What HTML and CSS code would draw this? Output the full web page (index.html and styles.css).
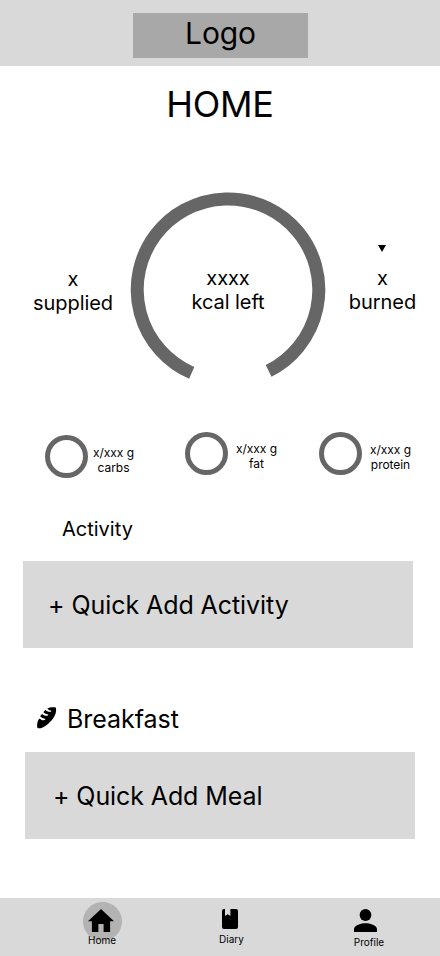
FILE: index.html
```html
<!DOCTYPE html>
<html lang="en">
<head>
<meta charset="utf-8">
<title>Home</title>
<link rel="stylesheet" href="styles.css">
</head>
<body>
<div class="app">
  <header class="topbar"><div class="logo">Logo</div></header>
  <main class="content">
    <h1 class="title">HOME</h1>
    <section class="summary">
      <div class="stat supplied">x<br>supplied</div>
      <div class="gauge">
        <svg class="gauge-arc" viewBox="0 0 196 196"><path d="M61.7 181.9A90.8 90.8 0 1 1 138.6 179.9" fill="none" stroke="#666" stroke-width="13"/></svg>
        <div class="stat left">xxxx<br>kcal left</div>
      </div>
      <div class="stat burned"><svg class="caret" viewBox="0 0 8 7"><path d="M0 0h8L4 7z"/></svg>x<br>burned</div>
    </section>
    <section class="macros">
      <div class="macro carbs"><span class="ring"></span><span class="amount">x/xxx g<br>carbs</span></div>
      <div class="macro fat"><span class="ring"></span><span class="amount">x/xxx g<br>fat</span></div>
      <div class="macro protein"><span class="ring"></span><span class="amount">x/xxx g<br>protein</span></div>
    </section>
    <h2 class="activity-title">Activity</h2>
    <button class="quick activity">+ Quick Add Activity</button>
    <h2 class="meal-title">
      <svg class="bread" viewBox="0 0 20 22"><path d="M0.2 20.5C-.1 17 .4 14 2.4 11.6L4.8 13Q6.8 13.5 8.2 12.7L8.3 12.1Q5.2 11.4 3.2 9.6Q3.5 8 5 7L7.6 8.5Q9.8 9.1 11.2 8.2L11.2 7.5Q8.3 6.9 6.5 5.4Q7.1 3.9 8.4 3.1L10.8 4.6Q12.8 5.2 14.3 4.4L14.2 3.7Q11.8 3.2 10.2 1.8C12.5 .3 16 0 18.8 .6C20 5.6 17.7 10 14 14C10.3 17.9 5 22 1.2 21.2Z"/></svg>
      <span>Breakfast</span>
    </h2>
    <button class="quick meal">+ Quick Add Meal</button>
  </main>
  <nav class="tabs">
    <a class="tab home"><span class="disc"><svg class="house" viewBox="2 3 20 17" preserveAspectRatio="none"><path d="M10 20v-6h4v6h5v-8h3L12 3 2 12h3v8z"/></svg></span><span class="label">Home</span></a>
    <a class="tab diary"><svg class="book" viewBox="0 0 16 20"><path d="M2 0H3V7L5.7 5.2L8.4 7V0H14Q16 0 16 2V18Q16 20 14 20H2Q0 20 0 18V2Q0 0 2 0Z"/></svg><span class="label">Diary</span></a>
    <a class="tab profile"><svg class="person" viewBox="0 0 23 23"><circle cx="11.5" cy="6" r="5.9"/><path d="M0 23V20C0 16.2 7.5 14.2 11.5 14.2S23 16.2 23 20V23Z"/></svg><span class="label">Profile</span></a>
  </nav>
</div>
</body>
</html>
```
FILE: styles.css
```css
* { box-sizing: border-box; }
body { margin: 0; background: #fff; color: #000; font-family: Inter, sans-serif; }
svg { display: block; flex: none; }
h1, h2 { margin: 0; font-weight: 400; }
.app { width: 440px; height: 956px; display: flex; flex-direction: column; overflow: hidden; }
.topbar { height: 66px; flex: none; background: #d9d9d9; padding: 13px 0 0 133px; }
.logo { width: 175px; height: 45px; background: #a8a8a8; font-size: 30px; line-height: 40px; text-align: center; letter-spacing: -0.1px; }
.content { flex: 1; display: flex; flex-direction: column; }
.title { font-size: 36px; line-height: 44px; height: 44px; margin: 16px 0 0; text-align: center; letter-spacing: -0.25px; }
.summary { height: 196px; margin-top: 65px; display: flex; align-items: flex-start; }
.stat { font-size: 20px; line-height: 24px; text-align: center; white-space: nowrap; letter-spacing: -0.06px; }
.supplied { width: 84px; margin: 76px 0 0 31px; }
.gauge { width: 196px; height: 196px; margin-left: 15px; display: grid; }
.gauge > * { grid-area: 1 / 1; }
.gauge-arc { width: 196px; height: 196px; }
.left { padding-top: 75px; }
.burned { width: 84px; margin: 54px 0 0 14.5px; }
.caret { width: 8px; height: 7px; margin: 0 0 14px 37.5px; }
.macros { display: flex; height: 50px; margin-top: 45px; padding-left: 45px; }
.macro { display: flex; align-items: flex-start; }
.ring { width: 43px; height: 43px; border: 5px solid #666; border-radius: 50%; }
.amount { font-size: 12px; line-height: 15px; text-align: center; white-space: nowrap; width: 43px; letter-spacing: -0.05px; }
.carbs { width: 140px; padding-top: 3px; }
.fat { width: 134px; }
.carbs .amount { margin: 10px 0 0 4px; }
.fat .amount { margin: 9px 0 0 7px; }
.protein .amount { margin: 10px 0 0 7px; }
.activity-title { font-size: 20px; line-height: 24px; margin: 35px 0 0 62px; }
.quick { border: 0; border-radius: 0; width: 390px; height: 87px; flex: none; background: #d9d9d9; color: #000; font: 400 25px/30px Inter, sans-serif; text-align: left; letter-spacing: -0.07px; }
.activity { margin: 20px 0 0 23px; padding: 0 0 0 25px; }
.meal-title { display: flex; font-size: 25px; line-height: 30px; margin: 56px 0 0 37px; letter-spacing: -0.05px; }
.bread { width: 20px; height: 22px; margin: 2.5px 10px 0 0; }
.meal { margin: 18px 0 0 25px; padding: 0 0 0 28px; letter-spacing: -0.1px; }
.tabs { height: 58px; flex: none; background: #d9d9d9; display: flex; }
.tab { display: flex; flex-direction: column; align-items: center; }
.label { font-size: 10px; line-height: 12px; }
.home { width: 40px; margin: 4px 0 0 82px; }
.disc { width: 39px; height: 39px; border-radius: 50%; background: #b3b3b3; padding: 7px 0 0 5.5px; flex: none; }
.house { width: 26px; height: 23px; }
.home .label { margin-top: -7px; }
.diary { width: 40px; margin: 11px 0 0 89px; }
.book { width: 16px; height: 20px; margin-right: 2px; }
.diary .label { margin: 4px 0 0 1px; }
.profile { width: 40px; margin: 11px 0 0 98px; }
.person { width: 23px; height: 23px; margin-right: 7px; }
.profile .label { margin-top: 4px; }
```
